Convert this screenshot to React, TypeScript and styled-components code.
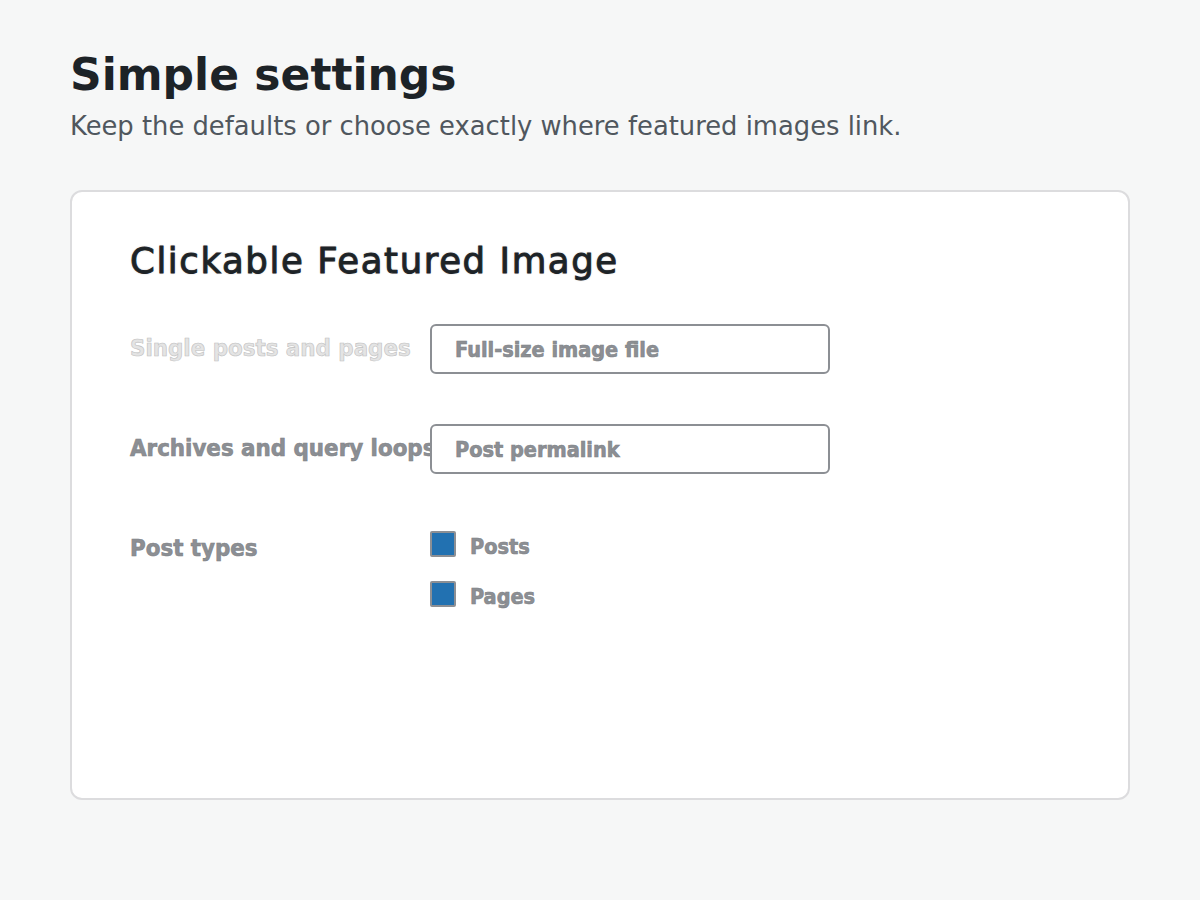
import React from 'react';
import styled, { createGlobalStyle } from 'styled-components';

const GlobalStyle = createGlobalStyle`
  html, body {
    margin: 0;
    padding: 0;
    background: #f6f7f7;
  }
  body {
    font-family: "DejaVu Sans", sans-serif;
  }
`;

const Page = styled.div`
  width: 1200px;
  height: 900px;
  box-sizing: border-box;
  padding: 49px 70px 0;
`;

const Heading = styled.h1`
  margin: 0;
  font-family: "DejaVu Sans", sans-serif;
  font-weight: 700;
  font-size: 44px;
  line-height: 52px;
  color: #1d2327;
`;

const Intro = styled.p`
  margin: 9px 0 0;
  font-size: 25.8px;
  line-height: 32px;
  color: #50575e;
`;

const Card = styled.section`
  margin-top: 48px;
  height: 610px;
  box-sizing: border-box;
  background: #fff;
  border: 2px solid #dcdcde;
  border-radius: 12px;
  padding: 46px 58px;
`;

const CardTitle = styled.h2`
  margin: 0 0 40px;
  font-family: "DejaVu Sans", sans-serif;
  font-weight: 400;
  font-size: 35.5px;
  line-height: 46px;
  letter-spacing: 1.6px;
  color: #1d2327;
  -webkit-text-stroke: 0.9px #1d2327;
  text-shadow: 0 0 2px #a8a8a8;
`;

const Row = styled.div`
  display: grid;
  grid-template-columns: 300px 400px;
  align-items: start;
  margin-bottom: 50px;
`;

const Label = styled.label<{ $muted?: boolean }>`
  padding-top: 2px;
  font-family: "DejaVu Sans Condensed", "DejaVu Sans", sans-serif;
  font-weight: 700;
  font-size: 23.8px;
  line-height: 44px;
  white-space: nowrap;
  color: ${(p) => (p.$muted ? '#e4e4e4' : '#8c8f94')};
  -webkit-text-stroke: 0.6px ${(p) => (p.$muted ? '#c0c0c0' : '#7e8185')};
`;

const Select = styled.div`
  position: relative;
  z-index: 1;
  height: 50px;
  box-sizing: border-box;
  border: 2px solid #8c8f94;
  border-radius: 6px;
  background: #fff;
  padding: 1px 23px 0;
  display: flex;
  align-items: center;
  font-family: "DejaVu Sans Condensed", "DejaVu Sans", sans-serif;
  font-weight: 700;
  font-size: 21.5px;
  color: #8c8f94;
  -webkit-text-stroke: 0.6px #7e8185;
`;

const Checks = styled.div`
  display: flex;
  flex-direction: column;
  gap: 24px;
  padding-top: 7px;
`;

const Check = styled.div`
  display: flex;
  align-items: center;
  gap: 14px;
  height: 26px;
  font-family: "DejaVu Sans Condensed", "DejaVu Sans", sans-serif;
  font-weight: 700;
  font-size: 21.5px;
  color: #8c8f94;
  -webkit-text-stroke: 0.6px #7e8185;
`;

const CheckText = styled.span`
  padding-top: 5px;
`;

const Box = styled.span`
  width: 26px;
  height: 26px;
  box-sizing: border-box;
  background: #2271b1;
  border: 2px solid #8c8f94;
  border-radius: 2px;
`;

export default function App() {
  return (
    <>
      <GlobalStyle />
      <Page>
        <Heading>Simple settings</Heading>
        <Intro>Keep the defaults or choose exactly where featured images link.</Intro>
        <Card>
          <CardTitle>Clickable Featured Image</CardTitle>
          <Row>
            <Label $muted>Single posts and pages</Label>
            <Select>Full-size image file</Select>
          </Row>
          <Row>
            <Label>Archives and query loops</Label>
            <Select>Post permalink</Select>
          </Row>
          <Row>
            <Label>Post types</Label>
            <Checks>
              <Check>
                <Box />
                <CheckText>Posts</CheckText>
              </Check>
              <Check>
                <Box />
                <CheckText>Pages</CheckText>
              </Check>
            </Checks>
          </Row>
        </Card>
      </Page>
    </>
  );
}
